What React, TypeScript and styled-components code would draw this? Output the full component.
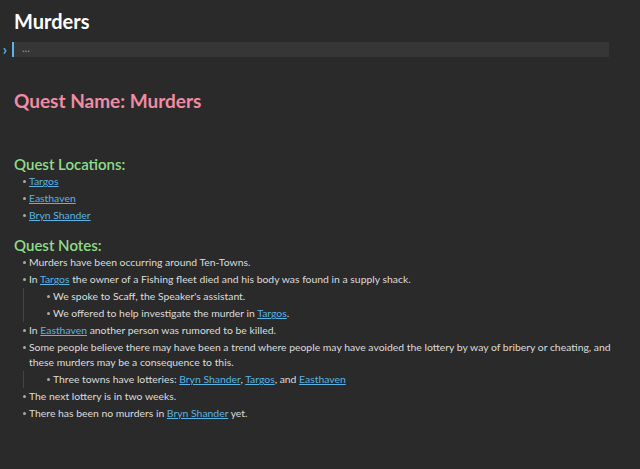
import * as React from "react";
import styled, { createGlobalStyle } from "styled-components";

const Global = createGlobalStyle`
  html, body { margin: 0; background: #2a2a2a; }
  body { font-family: Lato, "Open Sans", sans-serif; color: #dcddde; }
`;

const Page = styled.div`
  width: 640px;
  height: 469px;
  padding: 9px 0 0 14px;
  box-sizing: border-box;
  overflow: hidden;
`;
const Title = styled.h1`
  margin: 0;
  font-size: 20px;
  font-weight: 700;
  color: #ffffff;
  line-height: 24px;
`;
const CodeRow = styled.div`
  display: flex;
  align-items: center;
  margin: 9px 0 0 -14px;
  height: 15px;
`;
const Chevron = styled.span`
  width: 10px;
  color: #5ab4e6;
  font-size: 15px;
  font-weight: 700;
  line-height: 15px;
  text-align: center;
`;
const CodeBar = styled.div`
  width: 597px;
  height: 15px;
  margin-left: 2px;
  background: #363636;
  border-left: 2px solid #5ab4e6;
  font-size: 11px;
  color: #999;
  padding-left: 8px;
  line-height: 12px;
  box-sizing: border-box;
`;
const QuestName = styled.h2`
  margin: 32px 0 0;
  font-size: 19px;
  font-weight: 700;
  color: #f28ba4;
  line-height: 24px;
`;
const Section = styled.h3<{ top: number }>`
  margin: ${(p) => p.top}px 0 0;
  font-size: 15px;
  font-weight: 600;
  color: #8fdc8a;
  line-height: 18px;
`;
const List = styled.ul<{ nested?: boolean }>`
  list-style: none;
  margin: 0;
  padding: 0 0 0 ${(p) => (p.nested ? 23 : 9)}px;
  ${(p) => (p.nested ? "border-left: 1px solid #444; margin-left: 9px;" : "")}
`;
const Item = styled.li`
  position: relative;
  font-size: 10.4px;
  line-height: 15px;
  padding: 1px 0 1px 6px;
  max-width: 600px;
  &::before {
    content: "";
    position: absolute;
    left: 0;
    top: 7px;
    width: 3px;
    height: 3px;
    border-radius: 50%;
    background: #aaa;
  }
`;
const Link = styled.a`
  color: #5ab4e6;
  text-decoration: underline;
`;

export default function App() {
  return (
    <Page>
      <Global />
      <Title>Murders</Title>
      <CodeRow>
        <Chevron>›</Chevron>
        <CodeBar>...</CodeBar>
      </CodeRow>
      <QuestName>Quest Name: Murders</QuestName>
      <Section top={42}>Quest Locations:</Section>
      <List>
        <Item><Link>Targos</Link></Item>
        <Item><Link>Easthaven</Link></Item>
        <Item><Link>Bryn Shander</Link></Item>
      </List>
      <Section top={12}>Quest Notes:</Section>
      <List>
        <Item>Murders have been occurring around Ten-Towns.</Item>
        <Item>
          In <Link>Targos</Link> the owner of a Fishing fleet died and his body was found in a supply shack.
        </Item>
      </List>
      <List nested>
        <Item>We spoke to Scaff, the Speaker's assistant.</Item>
        <Item>We offered to help investigate the murder in <Link>Targos</Link>.</Item>
      </List>
      <List>
        <Item>In <Link>Easthaven</Link> another person was rumored to be killed.</Item>
        <Item>
          Some people believe there may have been a trend where people may have avoided the lottery by way of bribery or cheating, and these murders may be a consequence to this.
        </Item>
      </List>
      <List nested>
        <Item>
          Three towns have lotteries: <Link>Bryn Shander</Link>, <Link>Targos</Link>, and <Link>Easthaven</Link>
        </Item>
      </List>
      <List>
        <Item>The next lottery is in two weeks.</Item>
        <Item>There has been no murders in <Link>Bryn Shander</Link> yet.</Item>
      </List>
    </Page>
  );
}
